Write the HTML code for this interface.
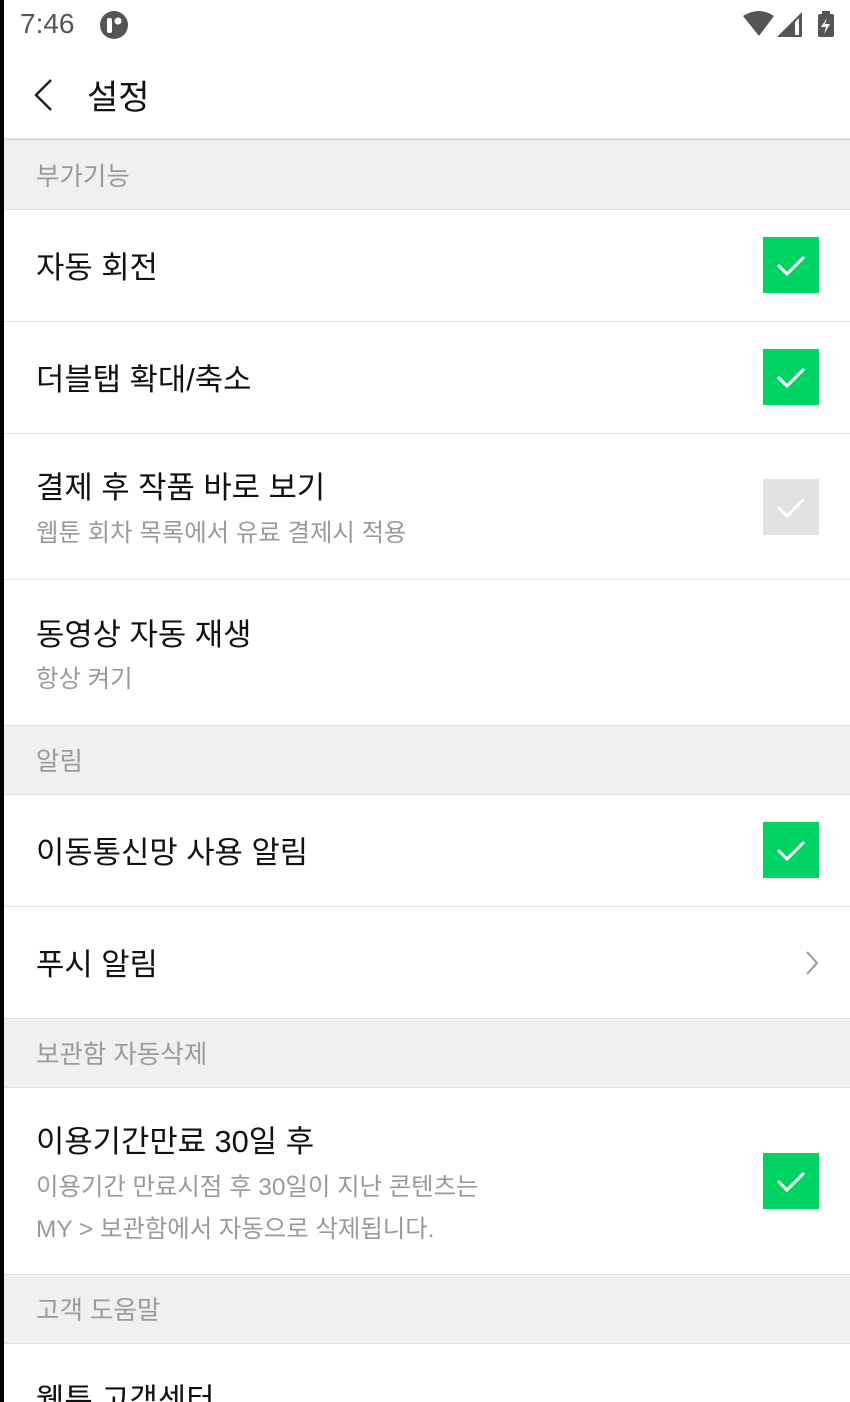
<!DOCTYPE html>
<html style="height:1402px;overflow:hidden"><head><meta charset="utf-8"><style>
*{margin:0;padding:0;box-sizing:border-box}
body{width:850px;height:1402px;overflow:hidden;background:#fff;font-family:"Liberation Sans","Noto Sans CJK KR",sans-serif;position:relative}
.bar{position:absolute;left:0;top:0;width:4px;height:1402px;background:#000;z-index:5}
.a{position:absolute;left:4px;right:0}
.h{background:#f0f0f0;border-top:1px solid #e2e2e2;border-bottom:1px solid #e2e2e2}
.h span{position:absolute;left:32px;top:50%;transform:translateY(-52%);font-size:25.5px;color:#9a9a9a}
.r{border-bottom:1px solid #e2e2e2}
.t{position:absolute;left:32px;font-size:30.8px;color:#111}
.s{position:absolute;left:32px;font-size:24.4px;color:#9a9a9a}
.cb{position:absolute;left:759px;width:56px;height:56px;background:#00d564}
.cb.off{background:#e2e2e2}
.cb svg{position:absolute;left:0;top:0}
</style></head><body>
<div class="bar"></div>
<div style="position:absolute;left:20px;top:8px;font-size:28px;color:#555">7:46</div>
<svg style="position:absolute;left:99px;top:10px" width="30" height="30" viewBox="0 0 30 30"><circle cx="15" cy="15" r="14" fill="#555"/><rect x="8" y="8" width="5" height="15" rx="2" fill="#fff"/><circle cx="19" cy="11" r="3.5" fill="#fff"/></svg>
<svg style="position:absolute;left:742px;top:10px" width="96" height="30" viewBox="0 0 96 30"><path d="M1 6 Q17 -4 32 6 L17 26 Z" fill="#555"/><path d="M35 27 L60 2 L60 27 Z" fill="#555"/><path d="M53 12 L57 8 L57 25 L53 25 Z" fill="#fff"/><rect x="76" y="4" width="16" height="23" rx="2" fill="#555"/><rect x="80" y="1" width="8" height="4" fill="#555"/><path d="M85 8 L79 17 L84 17 L82 24 L88 14 L83 14 Z" fill="#fff"/></svg>
<svg style="position:absolute;left:32px;top:78px" width="24" height="34" viewBox="0 0 24 34"><path d="M19 2 L4 17 L19 32" stroke="#222" stroke-width="2.5" fill="none"/></svg>
<div style="position:absolute;left:87px;top:70px;font-size:34px;color:#111">설정</div>
<div class="a" style="top:138px;height:2px;background:#dcdcdc"></div>

<div class="a h" style="top:140px;height:70px"><span>부가기능</span></div>
<div class="a r" style="top:210px;height:112px"><div class="t" style="top:32px">자동 회전</div><div class="cb" style="top:27px"><svg width="56" height="56"><path d="M15 28 L24 37 L41 20" stroke="#fff" stroke-width="3" fill="none"/></svg></div></div>
<div class="a r" style="top:322px;height:112px"><div class="t" style="top:32px">더블탭 확대/축소</div><div class="cb" style="top:27px"><svg width="56" height="56"><path d="M15 28 L24 37 L41 20" stroke="#fff" stroke-width="3" fill="none"/></svg></div></div>
<div class="a r" style="top:434px;height:146px"><div class="t" style="top:28px">결제 후 작품 바로 보기</div><div class="s" style="top:80px">웹툰 회차 목록에서 유료 결제시 적용</div><div class="cb off" style="top:45px"><svg width="56" height="56"><path d="M15 28 L24 37 L41 20" stroke="#fff" stroke-width="3" fill="none"/></svg></div></div>
<div class="a" style="top:580px;height:146px"><div class="t" style="top:29px">동영상 자동 재생</div><div class="s" style="top:80px">항상 켜기</div></div>

<div class="a h" style="top:725px;height:70px"><span>알림</span></div>
<div class="a r" style="top:795px;height:112px"><div class="t" style="top:32px">이동통신망 사용 알림</div><div class="cb" style="top:27px"><svg width="56" height="56"><path d="M15 28 L24 37 L41 20" stroke="#fff" stroke-width="3" fill="none"/></svg></div></div>
<div class="a" style="top:907px;height:112px"><div class="t" style="top:32px">푸시 알림</div><svg style="position:absolute;left:800px;top:42px" width="16" height="28" viewBox="0 0 16 28"><path d="M3 3 L13 14 L3 25" stroke="#999" stroke-width="2" fill="none"/></svg></div>

<div class="a h" style="top:1018px;height:70px"><span>보관함 자동삭제</span></div>
<div class="a r" style="top:1088px;height:187px"><div class="t" style="top:28px">이용기간만료 30일 후</div><div class="s" style="top:80px">이용기간 만료시점 후 30일이 지난 콘텐츠는</div><div class="s" style="top:122px">MY &gt; 보관함에서 자동으로 삭제됩니다.</div><div class="cb" style="top:65px"><svg width="56" height="56"><path d="M15 28 L24 37 L41 20" stroke="#fff" stroke-width="3" fill="none"/></svg></div></div>

<div class="a h" style="top:1274px;height:70px"><span>고객 도움말</span></div>
<div class="a" style="top:1344px;height:58px;overflow:hidden"><div class="t" style="top:30px">웹툰 고객센터</div></div>
</body></html>
